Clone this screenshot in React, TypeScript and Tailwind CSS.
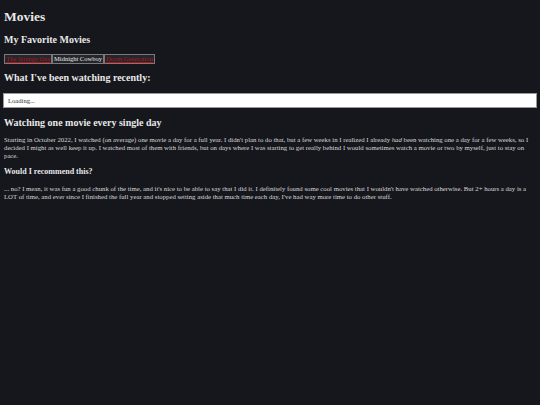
import React from 'react';

const favorites = [
    { title: 'The Strange One', link: true },
    { title: 'Midnight Cowboy', link: false },
    { title: 'Doom Generation', link: true },
];

const App = () => {
    return (
        <div className="min-h-[405px] bg-[#15171c] text-[#e8e8e8] px-[4px] pt-[9px] font-['Liberation_Serif',serif]">
            <h1 className="text-[13.5px] font-bold leading-[16px]">Movies</h1>

            <h2 className="mt-[9px] text-[10px] font-bold leading-[12px]">My Favorite Movies</h2>
            <div className="mt-[8px] flex items-center">
                {favorites.map((m) => (
                    <div key={m.title} className="border border-[#7a7a7a] bg-[#25262b] px-[1px] text-[6.5px] leading-[8px]">
                        {m.link ? (
                            <a href="#" className="text-[#b3111b] underline">{m.title}</a>
                        ) : (
                            <span className="text-[#e8e8e8]">{m.title}</span>
                        )}
                    </div>
                ))}
            </div>

            <h2 className="mt-[8px] text-[10px] font-bold leading-[12px]">What I've been watching recently:</h2>
            <div className="mt-[9px] -mx-[1px] border border-[#999] bg-white text-[#333] text-[6.6px] leading-[13px] px-[4px]">
                Loading...
            </div>

            <h2 className="mt-[9px] text-[10px] font-bold leading-[12px]">Watching one movie every single day</h2>
            <p className="mt-[7px] text-[6.75px] leading-[8px] text-[#d8d8d8]">
                Starting in October 2022, I watched (on average) one movie a day for a full year. I didn't plan to do that, but a few weeks in I realized I already <em>had</em> been watching one a day for a few weeks, so I decided I might as well keep it up. I watched most of them with friends, but on days where I was starting to get really behind I would sometimes watch a movie or two by myself, just to stay on pace.
            </p>

            <h3 className="mt-[7px] text-[8px] font-bold leading-[10px]">Would I recommend this?</h3>
            <p className="mt-[8px] text-[6.75px] leading-[8px] text-[#d8d8d8]">
                ... no? I mean, it was fun a good chunk of the time, and it's nice to be able to say that I did it. I definitely found some cool movies that I wouldn't have watched otherwise. But 2+ hours a day is a LOT of time, and ever since I finished the full year and stopped setting aside that much time each day, I've had way more time to do other stuff.
            </p>
        </div>
    );
};

export default App;
